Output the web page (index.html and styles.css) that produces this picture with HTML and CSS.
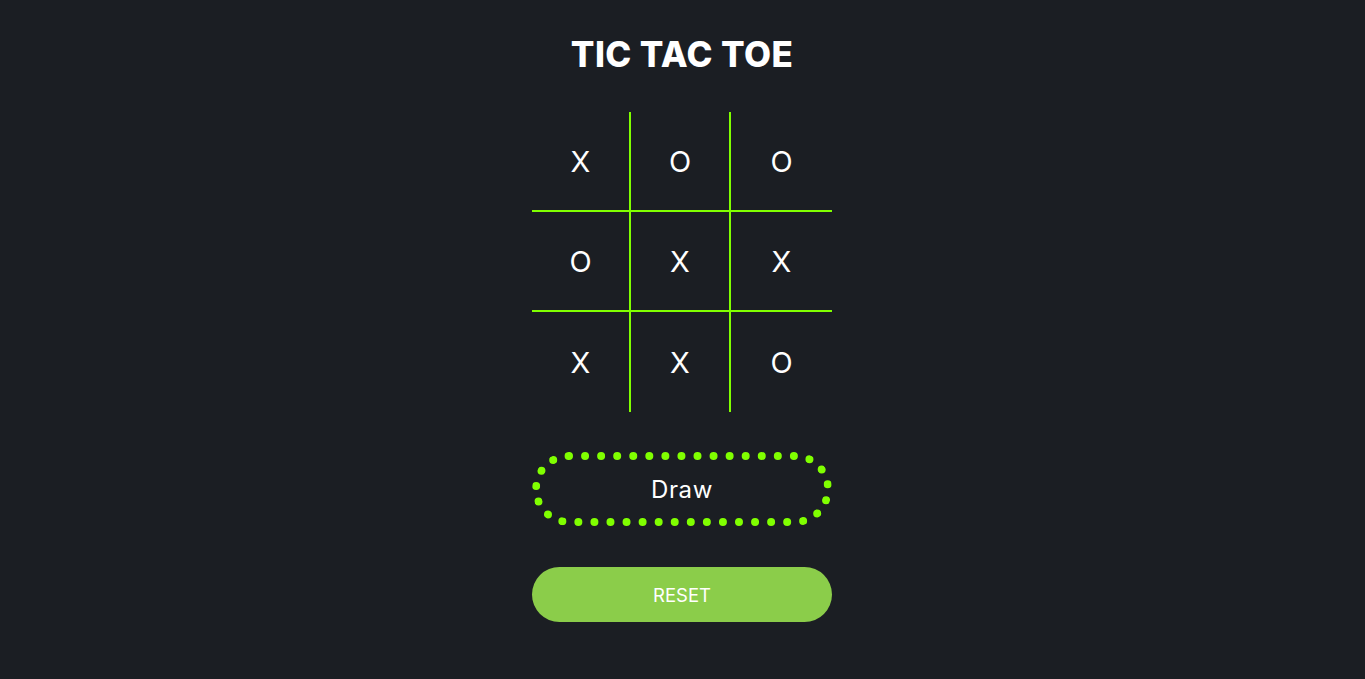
FILE: index.html
```html
<!DOCTYPE html>
<html lang="en">
<head>
<meta charset="utf-8">
<title>Tic Tac Toe</title>
<link rel="stylesheet" href="styles.css">
</head>
<body>
<main class="app">
  <h1 class="title">TIC TAC TOE</h1>
  <div class="board">
    <div class="cell c-r c-b">X</div>
    <div class="cell c-r c-b">O</div>
    <div class="cell c-b">O</div>
    <div class="cell c-r c-b">O</div>
    <div class="cell c-r c-b">X</div>
    <div class="cell c-b">X</div>
    <div class="cell c-r">X</div>
    <div class="cell c-r">X</div>
    <div class="cell">O</div>
  </div>
  <div class="status">Draw</div>
  <button class="reset">RESET</button>
</main>
</body>
</html>
```
FILE: styles.css
```css
html, body {
  margin: 0;
  padding: 0;
  background: #1b1e23;
}
body {
  font-family: Inter, "Open Sans", sans-serif;
  color: #ffffff;
}
.app {
  display: flex;
  flex-direction: column;
  align-items: center;
  padding-top: 30px;
  padding-right: 1px;
}
.title {
  margin: 0;
  font-size: 35px;
  line-height: 48px;
  font-weight: 800;
  letter-spacing: 0.4px;
}
.board {
  margin-top: 34px;
  display: grid;
  grid-template-columns: 99px 100px 101px;
  grid-template-rows: repeat(3, 100px);
}
.cell {
  box-sizing: border-box;
  display: flex;
  align-items: center;
  justify-content: center;
  font-size: 29px;
  font-weight: 400;
}
.c-r { border-right: 2px solid #80ff00; }
.c-b { border-bottom: 2px solid #80ff00; }
.status {
  margin-top: 40px;
  box-sizing: border-box;
  width: 300px;
  height: 74px;
  border: 8px dotted #80ff00;
  border-radius: 37px;
  display: flex;
  align-items: center;
  justify-content: center;
  font-size: 24px;
  letter-spacing: 0.6px;
}
.reset {
  margin-top: 41px;
  width: 300px;
  height: 55px;
  border: none;
  border-radius: 28px;
  background: #8bcd4a;
  color: #ffffff;
  font-family: Inter, "Open Sans", sans-serif;
  font-size: 18.5px;
  font-weight: 400;
}
```
